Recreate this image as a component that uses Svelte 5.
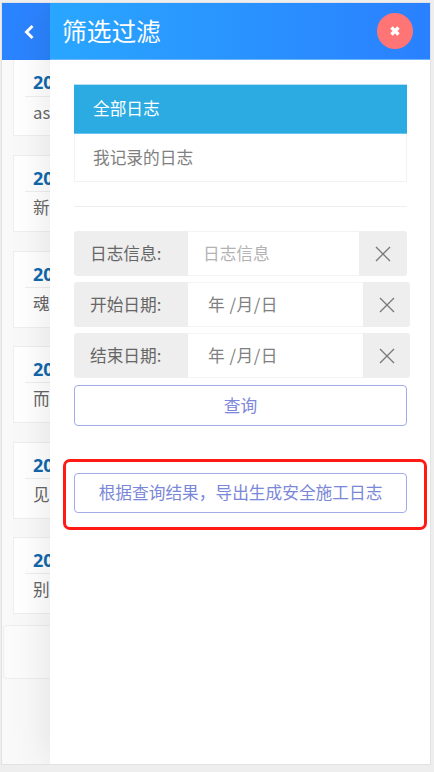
<script>
    let cards = [
        { year: '2021', text: 'asdf' },
        { year: '2021', text: '新增' },
        { year: '2021', text: '魂牵' },
        { year: '2021', text: '而今' },
        { year: '2021', text: '见见' },
        { year: '2021', text: '别来' }
    ];

    let fields = [
        { label: '日志信息:', placeholder: '日志信息', wide: false },
        { label: '开始日期:', value: '年 /月/日', wide: true },
        { label: '结束日期:', value: '年 /月/日', wide: true }
    ];
</script>

<div class="page">
    <div class="frame">
        <header class="topbar">
            <button class="back" aria-label="返回">
                <svg width="12" height="16" viewBox="0 0 12 16">
                    <path d="M9.5 2 L3.5 8 L9.5 14" fill="none" stroke="#fff" stroke-width="3" />
                </svg>
            </button>
        </header>

        <div class="list">
            {#each cards as card, i}
                <div class="card" class:first={i === 0}>
                    <div class="year">{card.year}</div>
                    <div class="body">{card.text}</div>
                </div>
            {/each}
            <div class="pager"></div>
        </div>

        <aside class="drawer">
            <div class="drawer-head">
                <h1>筛选过滤</h1>
                <button class="close" aria-label="关闭">
                    <svg width="12" height="12" viewBox="0 0 12 12">
                        <path d="M2.5 2.5 L9.5 9.5 M9.5 2.5 L2.5 9.5" stroke="#fff" stroke-width="3.4" />
                    </svg>
                </button>
            </div>

            <div class="drawer-body">
                <div class="tabs">
                    <div class="tab active">全部日志</div>
                    <div class="tab">我记录的日志</div>
                </div>

                <div class="rule"></div>

                <div class="fields">
                    {#each fields as f}
                        <div class="group" class:wide={f.wide}>
                            <span class="addon label">{f.label}</span>
                            {#if f.wide}
                                <span class="control date">{f.value}</span>
                            {:else}
                                <input class="control" placeholder={f.placeholder} />
                            {/if}
                            <span class="addon clear">
                                <svg width="16" height="16" viewBox="0 0 16 16">
                                    <path d="M1 1 L15 15 M15 1 L1 15" stroke="#777" stroke-width="1.3" fill="none" />
                                </svg>
                            </span>
                        </div>
                    {/each}
                </div>

                <button class="btn">查询</button>

                <div class="highlight">
                    <button class="btn export">根据查询结果，导出生成安全施工日志</button>
                </div>
            </div>
        </aside>
    </div>
</div>

<style>
    :global(body) {
        margin: 0;
        background: #f0f0f0;
    }

    * {
        box-sizing: border-box;
    }

    .page {
        width: 434px;
        height: 772px;
        padding: 3px 2px 6px 2px;
        background: #eeeeee;
        font-family: "Noto Sans CJK SC", "Liberation Sans", sans-serif;
        overflow: hidden;
    }

    .frame {
        position: relative;
        width: 428px;
        height: 761px;
        background: #f9f9f9;
        overflow: hidden;
        box-shadow: 0 0 0 1px #e2e2e2;
    }

    .topbar {
        height: 57px;
        background: linear-gradient(90deg, #2b84ff, #2a7cf2);
    }

    .back {
        width: 48px;
        height: 57px;
        padding: 0 0 0 5px;
        border: none;
        background: transparent;
        display: flex;
        align-items: center;
        justify-content: center;
    }

    .list {
        padding-left: 11px;
    }

    .card {
        height: 77px;
        margin-bottom: 18.6px;
        padding: 10px 0 0 11px;
        background: #fff;
        border: 1px solid #eeeeee;
        white-space: nowrap;
    }

    .card.first {
        height: 76px;
        margin-bottom: 19px;
        padding-top: 10px;
        border-top: none;
    }

    .first .year {
        height: 27px;
    }

    .year {
        height: 26px;
        padding-left: 8px;
        font-family: "Open Sans", "Liberation Sans", sans-serif;
        font-size: 18px;
        line-height: 24px;
        font-weight: 700;
        color: #0f68ad;
        border-bottom: 1px solid #eeeeee;
    }

    .body {
        padding: 3px 0 0 8px;
        font-size: 16.7px;
        line-height: 24px;
        color: #666;
    }

    .pager {
        height: 54px;
        margin: -8px 0 0 -10px;
        background: #fbfbfb;
        border: 1px solid #eeeeee;
        border-radius: 4px;
    }

    .drawer {
        position: absolute;
        top: 0;
        left: 48px;
        width: 380px;
        height: 100%;
        background: #fff;
        box-shadow: -4px 0 36px rgba(0, 0, 0, 0.09);
    }

    .drawer-head {
        height: 57px;
        padding: 0 14px 0 12px;
        display: flex;
        align-items: center;
        justify-content: space-between;
        background: linear-gradient(90deg, #29a6ff, #2a80ff);
        border-bottom: 1px solid #6db4ff;
    }

    h1 {
        margin: 0;
        font-size: 24.7px;
        font-weight: 400;
        color: #fff;
        line-height: 36px;
        transform: translateY(-1px);
    }

    .close {
        width: 36px;
        height: 36px;
        padding: 0;
        margin-right: 3px;
        border: none;
        border-radius: 50%;
        background: #ff7575;
        display: flex;
        align-items: center;
        justify-content: center;
    }

    .drawer-body {
        padding: 24px 23px 0 24px;
    }

    .tabs {
        width: 333px;
    }

    .tab {
        height: 48px;
        padding-left: 18px;
        font-size: 16.7px;
        line-height: 46px;
        color: #808080;
        background: #fff;
        border: 1px solid #f2f2f2;
        border-top: none;
    }

    .tab.active {
        height: 50px;
        padding-left: 19px;
        line-height: 46px;
        color: #fff;
        background: #2babe2;
        border: none;
        border-top: 1px solid #b4def3;
        border-bottom: 1px solid #6cc4ee;
    }

    .rule {
        width: 333px;
        height: 1px;
        margin: 24px 0;
        background: #eeeeee;
    }

    .fields {
        display: flex;
        flex-direction: column;
        gap: 6px;
    }

    .group {
        display: flex;
        width: 333px;
        height: 45px;
    }

    .group.wide {
        width: 336px;
    }

    .addon {
        display: flex;
        align-items: center;
        justify-content: center;
        background: #eeeeee;
        flex: none;
    }

    .label {
        width: 114px;
        padding: 0 0 2px 16px;
        justify-content: flex-start;
        font-size: 16.7px;
        color: #666;
        border-radius: 3px 0 0 3px;
    }

    .clear {
        width: 48px;
        border-radius: 0 3px 3px 0;
    }

    .wide .clear {
        width: 47px;
    }

    .control {
        flex: 1;
        min-width: 0;
        height: 45px;
        padding: 0 0 2px 15px;
        font-family: inherit;
        font-size: 16.7px;
        color: #808080;
        background: #fff;
        border: 1px solid #f4f4f4;
        border-left: none;
        border-right: none;
        outline: none;
    }

    .control::placeholder {
        color: #b3b3b3;
    }

    .date {
        padding: 0 0 0 20px;
        line-height: 43px;
        letter-spacing: 0.5px;
        white-space: pre;
    }

    .btn {
        display: block;
        width: 333px;
        height: 41px;
        margin-top: 7px;
        padding: 0 0 2px;
        font-family: inherit;
        font-size: 16.7px;
        color: #7b87d8;
        background: #fff;
        border: 1px solid #a3ace8;
        border-radius: 4px;
    }

    .highlight {
        width: 364px;
        height: 71px;
        margin: 33px 0 0 -11px;
        padding: 11px 0 0 8px;
        border: 3.5px solid #ff1a14;
        border-radius: 7px;
    }

    .export {
        margin-top: 0;
        height: 40px;
    }
</style>
